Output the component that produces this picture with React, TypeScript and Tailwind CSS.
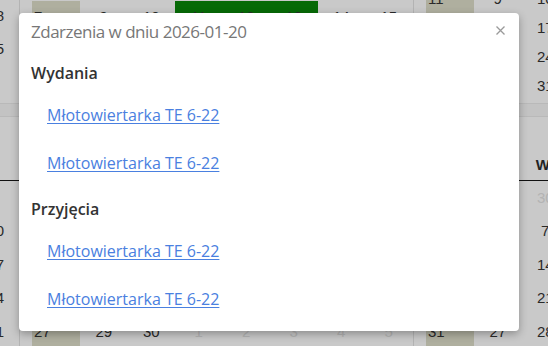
import React from "react";

type Cell = { t: string; f?: boolean; g?: boolean };

const c = (t: string | number, f = false, g = false): Cell => ({ t: String(t), f, g });

function Row({ wk, days, h }: { wk: string; days: Cell[]; h: string }) {
  return (
    <div className={`flex ${h}`}>
      <div className="w-[48px] shrink-0 bg-[#afaf9f] pl-[2px] flex items-center">{wk}</div>
      {days.map((d, i) => (
        <div
          key={i}
          className={`w-[47.5px] shrink-0 flex items-center justify-center ${d.g ? "bg-[#076a07]" : ""} ${
            d.f ? "text-[#b3b3b3]" : ""
          }`}
        >
          {d.t}
        </div>
      ))}
    </div>
  );
}

function Header() {
  const names = ["Pn", "Wt", "Śr", "Cz", "Pt", "So", "Nd"];
  return (
    <div className="flex h-[31px] border-b border-[#111] font-bold text-[#222]">
      <div className="w-[48px] shrink-0 bg-[#afaf9f]" />
      {names.map((n) => (
        <div key={n} className="w-[47.5px] shrink-0 flex items-center justify-center">
          {n}
        </div>
      ))}
    </div>
  );
}

function Link() {
  return (
    <a href="#" className="text-base leading-6 text-[#4a80e0] underline underline-offset-[2px] w-fit">
      Młotowiertarka TE 6-22
    </a>
  );
}

export default function App() {
  const r = (from: number, to: number) => {
    const out: Cell[] = [];
    for (let i = from; i <= to; i++) out.push(c(i));
    return out;
  };
  return (
    <div className="relative w-[548px] h-[346px] overflow-hidden bg-[#c9c9c9] font-['Liberation_Sans',Arial,sans-serif] text-[15px] text-[#2a2a2a]">
      {/* top section */}
      <div className="flex h-[103px] overflow-hidden">
        <div className="w-[20px] shrink-0 border-r border-[#b3b3b3] overflow-hidden">
          <div className="ml-[-28px] w-[47.5px]">
            <div className="h-[33px] flex items-center justify-center">18</div>
            <div className="h-[33px] flex items-center justify-center">25</div>
            <div className="h-[33px] flex items-center justify-center text-[#b3b3b3]">1</div>
          </div>
        </div>
        <div className="w-[394px] shrink-0 border-r border-[#b3b3b3] pl-[12px] pt-[1px] overflow-hidden">
          <Row wk="7" h="h-[33px]" days={[c(9), c(10), c(11, false, true), c(12, false, true), c(13, false, true), c(14), c(15)]} />
          <Row wk="8" h="h-[33px]" days={r(16, 22)} />
          <Row wk="9" h="h-[33px]" days={[...r(23, 28), c(1, true)]} />
        </div>
        <div className="flex-1 pl-[12px] overflow-hidden">
          <div className="mt-[-15px]">
            <Row wk="11" h="h-[29px]" days={r(9, 15)} />
            <Row wk="12" h="h-[29px]" days={r(16, 22)} />
            <Row wk="13" h="h-[29px]" days={r(23, 29)} />
            <Row wk="14" h="h-[29px]" days={[c(30), c(31), c(1, true), c(2, true), c(3, true), c(4, true), c(5, true)]} />
          </div>
        </div>
      </div>

      {/* band between month rows */}
      <div className="h-[14px] border-y border-[#b9b9b9] bg-[#c3c3c3]" />

      {/* bottom section */}
      <div className="flex h-[229px] overflow-hidden">
        <div className="w-[20px] shrink-0 border-r border-[#b3b3b3] overflow-hidden pt-[33px]">
          <div className="h-[31px] border-b border-[#111]" />
          <div className="ml-[-28px] w-[47.5px]">
            {["3", "10", "17", "24", "31"].map((t) => (
              <div key={t} className="h-[33.5px] flex items-center justify-center">
                {t}
              </div>
            ))}
          </div>
        </div>
        <div className="w-[394px] shrink-0 border-r border-[#b3b3b3] pl-[12px] pt-[33px] overflow-hidden">
          <Header />
          <Row wk="23" h="h-[33.5px]" days={r(1, 7)} />
          <Row wk="24" h="h-[33.5px]" days={r(8, 14)} />
          <Row wk="25" h="h-[33.5px]" days={r(15, 21)} />
          <Row wk="26" h="h-[33.5px]" days={r(22, 28)} />
          <Row wk="27" h="h-[33.5px]" days={[c(29), c(30), c(1, true), c(2, true), c(3, true), c(4, true), c(5, true)]} />
        </div>
        <div className="flex-1 pl-[12px] pt-[33px] overflow-hidden">
          <div className="w-[380px]">
            <Header />
            <Row wk="27" h="h-[33.5px]" days={[c(29, true), c(30, true), ...r(1, 5)]} />
            <Row wk="28" h="h-[33.5px]" days={r(6, 12)} />
            <Row wk="29" h="h-[33.5px]" days={r(13, 19)} />
            <Row wk="30" h="h-[33.5px]" days={r(20, 26)} />
            <Row wk="31" h="h-[33.5px]" days={[...r(27, 31), c(1, true), c(2, true)]} />
          </div>
        </div>
      </div>

      {/* modal */}
      <div className="absolute left-[19px] top-[13px] w-[500px] h-[318px] rounded-[4px] bg-white shadow-[0_3px_9px_rgba(0,0,0,0.3)] px-3 pt-[7px] font-['Open_Sans',sans-serif]">
        <div className="text-[17px] tracking-[-0.5px] leading-6 text-[#777]">Zdarzenia w dniu 2026-01-20</div>
        <button className="absolute right-[14px] top-[13px] w-[9px] h-[9px] flex items-center justify-center">
          <svg width="9" height="9" viewBox="0 0 9 9">
            <path d="M0.5 0.5 L8.5 8.5 M8.5 0.5 L0.5 8.5" stroke="#9a9a9a" strokeWidth="1.3" fill="none" />
          </svg>
        </button>
        <div className="mt-[17px] text-base font-semibold leading-6 text-[#333]">Wydania</div>
        <div className="mt-[18px] pl-4 flex flex-col gap-6">
          <Link />
          <Link />
        </div>
        <div className="mt-[22px] text-base font-semibold leading-6 text-[#333]">Przyjęcia</div>
        <div className="mt-[18px] pl-4 flex flex-col gap-6">
          <Link />
          <Link />
        </div>
      </div>
    </div>
  );
}
